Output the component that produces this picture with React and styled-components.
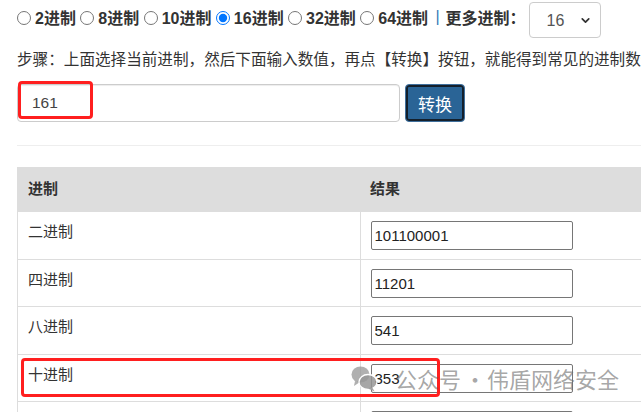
import React, { useState } from "react"
import styled, { createGlobalStyle } from "styled-components"
import { ChevronDown } from "lucide-react"

const GlobalStyle = createGlobalStyle`
  html, body {
    margin: 0;
    padding: 0;
    overflow: hidden;
    background: #fff;
  }
  body {
    font-family: "Liberation Sans", Arial, "Noto Sans CJK SC", sans-serif;
    color: #333;
  }
`

const Page = styled.div`
  position: relative;
  width: 1000px;
  padding-left: 17px;
`

const TopBar = styled.div`
  display: flex;
  align-items: flex-start;
  height: 38px;
`

const RadioGroup = styled.div`
  display: flex;
  align-items: center;
  height: 34px;
  font-size: 16px;
  font-weight: bold;
  color: #333;
  white-space: nowrap;
`

const RadioLabel = styled.label`
  display: flex;
  align-items: center;
  margin-right: 4.4px;
  cursor: pointer;
`

const Radio = styled.input`
  width: 14px;
  height: 14px;
  margin: 1px 4px 0 0;
`

const Divider = styled.span`
  font-weight: normal;
  color: #337ab7;
  margin: 0 6px 0 3px;
`

const SelectWrap = styled.div`
  position: relative;
  margin: 2px 0 0 3px;
`

const Select = styled.select`
  appearance: none;
  width: 72px;
  height: 36px;
  padding: 0 0 0 17px;
  border: 1px solid #ccc;
  border-radius: 4px;
  background: #fff;
  font-family: "Liberation Sans", Arial, sans-serif;
  font-size: 16px;
  color: #555;
`

const SelectIcon = styled.span`
  position: absolute;
  right: 9px;
  top: 12px;
  pointer-events: none;
  display: flex;
`

const Steps = styled.div`
  margin-top: 11px;
  font-size: 15.6px;
  line-height: 22px;
  white-space: nowrap;
  color: #333;
`

const InputRow = styled.div`
  display: flex;
  gap: 5px;
  margin-top: 13px;
`

const ValueInput = styled.input`
  box-sizing: border-box;
  width: 383px;
  height: 38px;
  padding: 0 14px;
  border: 1px solid #ccc;
  border-radius: 4px;
  box-shadow: inset 0 1px 1px rgba(0, 0, 0, 0.075);
  font-family: "Liberation Sans", Arial, sans-serif;
  font-size: 15.5px;
  color: #444;
  outline: none;
`

const ConvertButton = styled.button`
  box-sizing: border-box;
  width: 60px;
  height: 38px;
  border: 1px solid #3f6f9c;
  border-radius: 4px;
  background: #2a6496;
  box-shadow: inset 0 0 0 2px #14202c;
  color: #fff;
  font-family: "Noto Sans CJK SC", sans-serif;
  font-size: 17px;
  cursor: pointer;
`

const Rule = styled.hr`
  margin: 23px 0 0;
  border: 0;
  border-top: 1px solid #eee;
`

const Table = styled.table`
  margin-top: 21px;
  width: 983px;
  border-collapse: collapse;
  border-left: 1px solid #ddd;
  font-size: 15px;
  color: #333;
`

const HeadCell = styled.th`
  background: #ddd;
  text-align: left;
  font-weight: bold;
  padding: 12px 10px;
  line-height: 20px;
  width: ${(p) => p.$w || "auto"};
`

const Cell = styled.td`
  border-top: 1px solid #ddd;
  border-right: 1px solid #ddd;
  padding: 9px 10px 8.5px;
  line-height: 22px;
  vertical-align: top;
`

const ResultInput = styled.input`
  box-sizing: border-box;
  display: block;
  width: 202px;
  height: 29px;
  padding: 0 3px;
  border: 1px solid #767676;
  border-radius: 2px;
  font-family: "Liberation Sans", Arial, sans-serif;
  font-size: 15px;
  color: #222;
`

const Highlight = styled.div`
  position: absolute;
  border: 3px solid #ff1f1f;
  border-radius: 4px;
  pointer-events: none;
`

const Watermark = styled.div`
  position: absolute;
  left: 351px;
  top: 362px;
  display: flex;
  align-items: center;
  gap: 17px;
  font-family: "Noto Sans CJK SC", sans-serif;
  font-size: 22px;
  color: rgba(110, 110, 110, 0.62);
  white-space: nowrap;
  pointer-events: none;
`

const Dot = styled.span`
  margin: 0 1px 0 3px;
`

const WeChatIcon = () => (
  <svg width="27" height="27" viewBox="0 0 27 27">
    <ellipse cx="9.5" cy="9.5" rx="9" ry="8" fill="rgba(150,150,150,0.75)" />
    <path d="M4 16 L3 21 L9 17 Z" fill="rgba(150,150,150,0.75)" />
    <ellipse cx="17" cy="17" rx="9" ry="7.5" fill="rgba(150,150,150,0.85)" stroke="#fff" strokeWidth="1.3" />
    <path d="M21 22 L23.5 26.5 L17 23.5 Z" fill="rgba(150,150,150,0.85)" />
  </svg>
)

const bases = ["2", "8", "10", "16", "32", "64"]

const rows = [
  ["二进制", "101100001"],
  ["四进制", "11201"],
  ["八进制", "541"],
  ["十进制", "353"],
  ["十六进制", "161"],
]

const App = () => {
  const [base, setBase] = useState("16")
  const [value, setValue] = useState("161")

  return (
    <>
      <GlobalStyle />
      <Page>
        <TopBar>
          <RadioGroup>
            {bases.map((b) => (
              <RadioLabel key={b}>
                <Radio
                  type="radio"
                  name="base"
                  checked={base === b}
                  onChange={() => setBase(b)}
                />
                {b}进制
              </RadioLabel>
            ))}
            <Divider>|</Divider>
            更多进制：
          </RadioGroup>
          <SelectWrap>
            <Select value={base} onChange={(e) => setBase(e.target.value)}>
              {bases.map((b) => (
                <option key={b} value={b}>{b}</option>
              ))}
            </Select>
            <SelectIcon>
              <ChevronDown size={13} strokeWidth={3.2} color="#333" />
            </SelectIcon>
          </SelectWrap>
        </TopBar>

        <Steps>
          步骤：上面选择当前进制，然后下面输入数值，再点【转换】按钮，就能得到常见的进制数值结果
        </Steps>

        <InputRow>
          <ValueInput value={value} onChange={(e) => setValue(e.target.value)} />
          <ConvertButton>转换</ConvertButton>
        </InputRow>

        <Rule />

        <Table>
          <thead>
            <tr>
              <HeadCell $w="322px">进制</HeadCell>
              <HeadCell>结果</HeadCell>
            </tr>
          </thead>
          <tbody>
            {rows.map(([name, res]) => (
              <tr key={name}>
                <Cell>{name}</Cell>
                <Cell>
                  <ResultInput readOnly value={res} />
                </Cell>
              </tr>
            ))}
          </tbody>
        </Table>

        <Highlight style={{ left: 18, top: 81, width: 69, height: 32 }} />
        <Highlight style={{ left: 21, top: 358, width: 413, height: 33 }} />
        <Watermark>
          <WeChatIcon />
          <span>
            公众号<Dot>·</Dot>伟盾网络安全
          </span>
        </Watermark>
      </Page>
    </>
  )
}

export default App
